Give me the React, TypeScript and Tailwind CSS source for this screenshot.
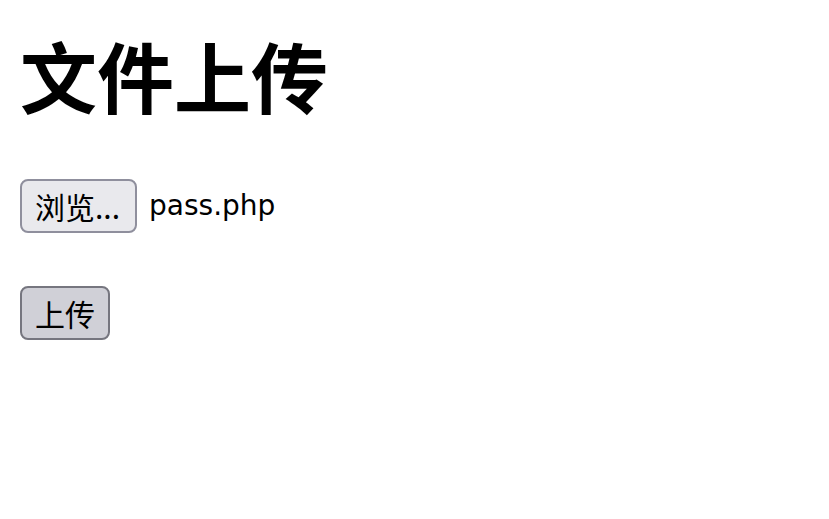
import React from "react";

export default function App() {
  return (
    <div className="min-h-[519px] bg-white px-[20px] pt-[33px] text-black font-['Noto_Sans_CJK_SC','Noto_Sans',sans-serif]">
      <h1 className="m-0 text-[77px] font-bold leading-[84px]">文件上传</h1>
      <div className="mt-[62px] flex items-center gap-[12px]">
        <button className="box-border h-[54px] rounded-[8px] border-2 border-[#8f8f9d] bg-[#e9e9ed] pl-[13px] pr-[15px] text-[30px] leading-none text-black">
          浏览...
        </button>
        <span className="text-[28px] leading-none font-['DejaVu_Sans','Noto_Sans_CJK_SC',sans-serif]">
          pass.php
        </span>
      </div>
      <div className="mt-[53px]">
        <button className="box-border h-[54px] rounded-[8px] border-2 border-[#76767f] bg-[#d0d0d7] px-[13px] text-[30px] leading-none text-black">
          上传
        </button>
      </div>
    </div>
  );
}
